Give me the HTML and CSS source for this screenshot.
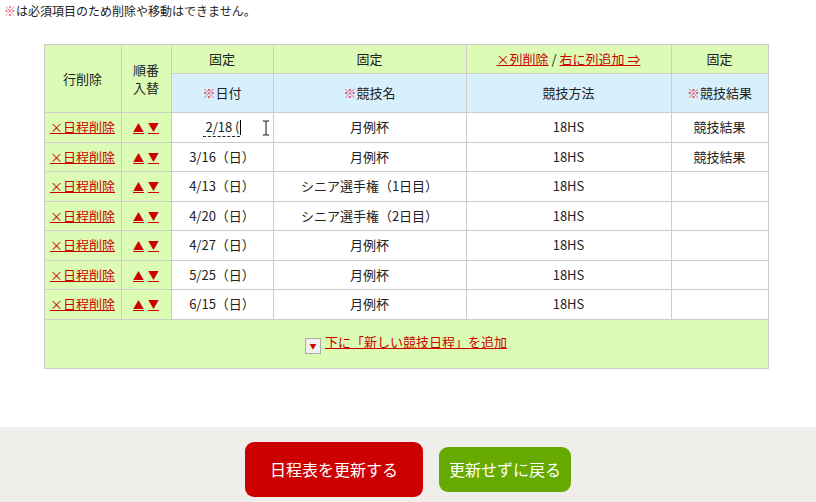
FILE: index.html
```
<!DOCTYPE html>
<html lang="ja">
<head>
    <meta charset="UTF-8">
    <title>日程表の編集</title>
    <link rel="stylesheet" href="styles.css">
</head>
<body>

<p class="note"><span class="req">※</span>は必須項目のため削除や移動はできません。</p>

<table class="schedule">
    <colgroup>
        <col class="c-del">
        <col class="c-sort">
        <col class="c-date">
        <col class="c-name">
        <col class="c-method">
        <col class="c-result">
    </colgroup>
    <thead>
        <tr class="head-top">
            <th rowspan="2" class="side">行削除</th>
            <th rowspan="2" class="side">順番<br>入替</th>
            <th>固定</th>
            <th>固定</th>
            <th><a href="#">×列削除</a> / <a href="#">右に列追加 ⇒</a></th>
            <th>固定</th>
        </tr>
        <tr class="head-sub">
            <th><span class="req">※</span>日付</th>
            <th><span class="req">※</span>競技名</th>
            <th>競技方法</th>
            <th><span class="req">※</span>競技結果</th>
        </tr>
    </thead>
    <tbody>
        <tr>
            <td class="side"><a href="#">×日程削除</a></td>
            <td class="side"><a href="#" class="arrow">▲</a><a href="#" class="arrow">▼</a></td>
            <td class="editing"><span class="ime">2/18 (</span><span class="caret"></span>
                <svg class="ibeam" width="8" height="16" viewBox="0 0 8 16"><path d="M1 1h2.5c.5 0 .5.5.5 1v12c0 .5 0 1-.5 1H1M7 1H4.5C4 1 4 1.5 4 2M7 15H4.5C4 15 4 14.5 4 14" fill="none" stroke="#111" stroke-width="1"/></svg>
            </td>
            <td>月例杯</td>
            <td>18HS</td>
            <td>競技結果</td>
        </tr>
        <tr>
            <td class="side"><a href="#">×日程削除</a></td>
            <td class="side"><a href="#" class="arrow">▲</a><a href="#" class="arrow">▼</a></td>
            <td>3/16（日）</td>
            <td>月例杯</td>
            <td>18HS</td>
            <td>競技結果</td>
        </tr>
        <tr>
            <td class="side"><a href="#">×日程削除</a></td>
            <td class="side"><a href="#" class="arrow">▲</a><a href="#" class="arrow">▼</a></td>
            <td>4/13（日）</td>
            <td>シニア選手権（1日目）</td>
            <td>18HS</td>
            <td></td>
        </tr>
        <tr>
            <td class="side"><a href="#">×日程削除</a></td>
            <td class="side"><a href="#" class="arrow">▲</a><a href="#" class="arrow">▼</a></td>
            <td>4/20（日）</td>
            <td>シニア選手権（2日目）</td>
            <td>18HS</td>
            <td></td>
        </tr>
        <tr>
            <td class="side"><a href="#">×日程削除</a></td>
            <td class="side"><a href="#" class="arrow">▲</a><a href="#" class="arrow">▼</a></td>
            <td>4/27（日）</td>
            <td>月例杯</td>
            <td>18HS</td>
            <td></td>
        </tr>
        <tr>
            <td class="side"><a href="#">×日程削除</a></td>
            <td class="side"><a href="#" class="arrow">▲</a><a href="#" class="arrow">▼</a></td>
            <td>5/25（日）</td>
            <td>月例杯</td>
            <td>18HS</td>
            <td></td>
        </tr>
        <tr>
            <td class="side"><a href="#">×日程削除</a></td>
            <td class="side"><a href="#" class="arrow">▲</a><a href="#" class="arrow">▼</a></td>
            <td>6/15（日）</td>
            <td>月例杯</td>
            <td>18HS</td>
            <td></td>
        </tr>
    </tbody>
    <tfoot>
        <tr>
            <td colspan="6" class="add-row"><span class="mini-btn">▼</span><a href="#">下に「新しい競技日程」を追加</a></td>
        </tr>
    </tfoot>
</table>

<div class="actions">
    <button class="btn btn-update">日程表を更新する</button>
    <button class="btn btn-back">更新せずに戻る</button>
</div>

</body>
</html>
```

FILE: styles.css
```
body {
    margin: 0;
    font-family: "Noto Sans CJK JP", "Noto Sans", sans-serif;
    font-size: 13px;
    color: #222;
    background: #fff;
}
a {
    color: #cc0000;
}
.req {
    color: #e8405c;
}
.note {
    margin: 0;
    padding: 2px 4px;
    font-size: 12px;
    line-height: 17px;
}
.schedule {
    margin: 23px auto 0;
    width: 724px;
    border-collapse: collapse;
    table-layout: fixed;
    position: relative;
    left: -2px;
}
.c-del { width: 77px; }
.c-sort { width: 50px; }
.c-date { width: 102px; }
.c-name { width: 193px; }
.c-method { width: 205px; }
.c-result { width: 97px; }
.schedule th,
.schedule td {
    border: 1px solid #cccccc;
    padding: 0;
    text-align: center;
    font-weight: normal;
    line-height: 16px;
}
.schedule th {
    line-height: 18px;
}
.head-top th {
    height: 28px;
    background: #dcfcb6;
}
.head-sub th {
    height: 38px;
    background: #d8f0fb;
}
.schedule td {
    height: 28.5px;
    background: #fff;
}
.schedule .side {
    background: #dcfcb6;
}
.arrow {
    font-size: 11px;
    margin: 0 2px;
}
.editing {
    position: relative;
}
.ime {
    border-bottom: 1px dashed #222;
    padding-left: 2px;
}
.caret {
    display: inline-block;
    width: 1px;
    height: 15px;
    background: #000;
    vertical-align: -3px;
}
.ibeam {
    position: absolute;
    left: 90px;
    top: 7px;
}
.schedule .add-row {
    height: 48px;
    background: #dcfcb6;
}
.mini-btn {
    display: inline-block;
    width: 14px;
    height: 14px;
    margin-right: 4px;
    border: 1px solid #aaa;
    background: #f0f0f0;
    color: #cc0000;
    font-size: 7px;
    line-height: 14px;
    vertical-align: -2px;
}
.actions {
    margin-top: 58px;
    background: #efeeeb;
    padding: 15px 0 10px;
    display: flex;
    justify-content: center;
    align-items: center;
    gap: 16px;
}
.btn {
    border: none;
    border-radius: 9px;
    color: #fff;
    font-family: "Noto Sans CJK JP", "Noto Sans", sans-serif;
    font-size: 16px;
}
.btn-update {
    width: 178px;
    height: 55px;
    background: #cc0000;
}
.btn-back {
    width: 132px;
    height: 45px;
    background: #66aa00;
}
```
